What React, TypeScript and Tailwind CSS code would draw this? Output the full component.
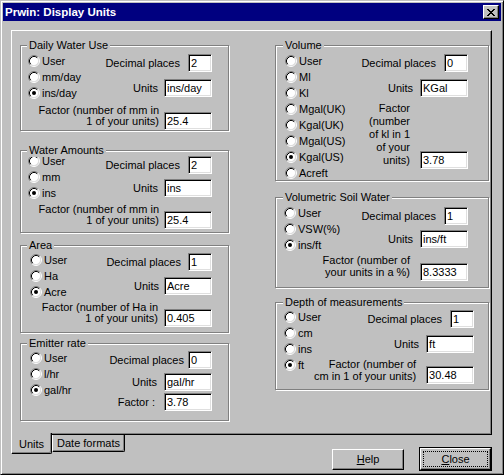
import React from "react";

function Radio({ label, checked }: { label: string; checked?: boolean }) {
  return (
    <div className="flex items-center h-[16px] whitespace-nowrap">
      <svg width="12" height="12" viewBox="0 0 12 12" className="shrink-0">
        <circle cx="6" cy="6" r="4.5" fill="#fff" />
        <path d="M2.11 9.89 A5.5 5.5 0 0 1 9.89 2.11" fill="none" stroke="#808080" />
        <path d="M9.89 2.11 A5.5 5.5 0 0 1 2.11 9.89" fill="none" stroke="#fff" />
        <path d="M2.82 9.18 A4.5 4.5 0 0 1 9.18 2.82" fill="none" stroke="#000" />
        <path d="M9.18 2.82 A4.5 4.5 0 0 1 2.82 9.18" fill="none" stroke="#dfdfdf" />
        {checked && <circle cx="6" cy="6" r="2" fill="#000" />}
      </svg>
      <span className="ml-[2px]">{label}</span>
    </div>
  );
}

function Edit({ value, w }: { value: string; w: string }) {
  return (
    <div
      className={`${w} h-[18px] shrink-0 bg-white border border-t-[#808080] border-l-[#808080] border-b-white border-r-white shadow-[inset_1px_1px_0_#000,inset_-1px_-1px_0_#dfdfdf] pl-[2px] leading-[16px] whitespace-nowrap overflow-hidden`}
    >
      {value}
    </div>
  );
}

function Group({
  label,
  className,
  right,
  children,
}: {
  label: string;
  className: string;
  right?: boolean;
  children: React.ReactNode;
}) {
  return (
    <div
      className={`relative border border-[#808080] shadow-[inset_1px_1px_0_#fff,1px_1px_0_#fff] ${className}`}
    >
      <div
        className={`absolute -top-[7px] ${right ? "left-[7px]" : "left-[6px]"} bg-[#c0c0c0] px-[2px] leading-[13px] whitespace-nowrap`}
      >
        {label}
      </div>
      {children}
    </div>
  );
}

function LabeledEdit({
  label,
  value,
  w,
  gap,
  className,
}: {
  label: string;
  value: string;
  w: string;
  gap: string;
  className?: string;
}) {
  return (
    <div className={`flex items-center ${className ?? ""}`}>
      <span className={`${gap} whitespace-nowrap`}>{label}</span>
      <Edit w={w} value={value} />
    </div>
  );
}

export default function App() {
  return (
    <div className="w-[504px] h-[475px] bg-[#c0c0c0] border border-t-[#c0c0c0] border-l-[#c0c0c0] border-r-black border-b-black shadow-[inset_1px_1px_0_#fff,inset_-1px_-1px_0_#808080] p-[2px] flex flex-col font-['Liberation_Sans',Arial,sans-serif] text-[11px] text-black overflow-hidden">
      {/* Title bar */}
      <div className="h-[18px] shrink-0 bg-[#000080] flex items-center justify-between pl-[2px] pr-[2px]">
        <span className="text-white font-bold text-[11.5px] leading-[18px]">Prwin: Display Units</span>
        <div className="w-[16px] h-[14px] bg-[#c0c0c0] border border-t-white border-l-white border-r-black border-b-black shadow-[inset_-1px_-1px_0_#808080] flex items-center justify-center">
          <svg width="8" height="7" viewBox="0 0 8 7" shapeRendering="crispEdges">
            <path
              d="M0 0h2v1H0z M6 0h2v1H6z M1 1h2v1H1z M5 1h2v1H5z M2 2h4v1H2z M3 3h2v1H3z M2 4h4v1H2z M1 5h2v1H1z M5 5h2v1H5z M0 6h2v1H0z M6 6h2v1H6z"
              fill="#000"
            />
          </svg>
        </div>
      </div>

      {/* Tab panel */}
      <div className="ml-[8px] mt-[9px] w-[481px] h-[405px] shrink-0 border border-t-white border-l-white border-r-black border-b-black shadow-[inset_-1px_-1px_0_#808080] flex pl-[8px] pt-[14px]">
        {/* Left column */}
        <div className="w-[209px] flex flex-col">
          <Group label="Daily Water Use" className="w-[209px] h-[86px]">
            <div className="flex">
              <div className="ml-[7px] mt-[7px] flex flex-col">
                <Radio label="User" />
                <Radio label="mm/day" />
                <Radio label="ins/day" checked />
              </div>
              <div className="flex-1 mr-[16px] mt-[8px] flex flex-col items-end">
                <LabeledEdit label="Decimal places" value="2" w="w-[24px]" gap="mr-[8px]" />
                <LabeledEdit label="Units" value="ins/day" w="w-[48px]" gap="mr-[6px]" className="mt-[7px]" />
              </div>
            </div>
            <div className="mt-[4px] mr-[16px] flex justify-end items-end">
              <div className="mr-[5px] mb-[3px] text-right leading-[11px] whitespace-nowrap">
                Factor (number of mm in
                <br />1 of your units)
              </div>
              <Edit w="w-[48px]" value="25.4" />
            </div>
          </Group>

          <Group label="Water Amounts" className="mt-[19px] w-[209px] h-[83px]">
            <div className="flex">
              <div className="ml-[7px] mt-[2px] flex flex-col">
                <Radio label="User" />
                <Radio label="mm" />
                <Radio label="ins" checked />
              </div>
              <div className="flex-1 mr-[16px] mt-[5px] flex flex-col items-end">
                <LabeledEdit label="Decimal places" value="2" w="w-[24px]" gap="mr-[8px]" />
                <LabeledEdit label="Units" value="ins" w="w-[48px]" gap="mr-[6px]" className="mt-[5px]" />
              </div>
            </div>
            <div className="mt-[3px] mr-[16px] flex justify-end items-end">
              <div className="mr-[5px] mb-[3px] text-right leading-[11px] whitespace-nowrap">
                Factor (number of mm in
                <br />1 of your units)
              </div>
              <Edit w="w-[48px]" value="25.4" />
            </div>
          </Group>

          <Group label="Area" className="mt-[12px] w-[209px] h-[88px]">
            <div className="flex">
              <div className="ml-[9px] mt-[6px] flex flex-col">
                <Radio label="User" />
                <Radio label="Ha" />
                <Radio label="Acre" checked />
              </div>
              <div className="flex-1 mr-[16px] mt-[7px] flex flex-col items-end">
                <LabeledEdit label="Decimal places" value="1" w="w-[24px]" gap="mr-[7px]" />
                <LabeledEdit label="Units" value="Acre" w="w-[48px]" gap="mr-[5px]" className="mt-[6px]" />
              </div>
            </div>
            <div className="mt-[2px] mr-[16px] flex justify-end items-end">
              <div className="mr-[6px] mb-[3px] text-right leading-[11px] whitespace-nowrap">
                Factor (number of Ha in
                <br />1 of your units)
              </div>
              <Edit w="w-[48px]" value="0.405" />
            </div>
          </Group>

          <Group label="Emitter rate" className="mt-[10px] w-[209px] h-[78px]">
            <div className="flex">
              <div className="ml-[9px] mt-[6px] flex flex-col">
                <Radio label="User" />
                <Radio label="l/hr" />
                <Radio label="gal/hr" checked />
              </div>
              <div className="flex-1 mr-[16px] mt-[7px] flex flex-col items-end">
                <LabeledEdit label="Decimal places" value="0" w="w-[24px]" gap="mr-[4px]" />
                <LabeledEdit label="Units" value="gal/hr" w="w-[48px]" gap="mr-[7px]" className="mt-[4px]" />
                <LabeledEdit label="Factor :" value="3.78" w="w-[48px]" gap="mr-[9px]" className="mt-[2px]" />
              </div>
            </div>
          </Group>
        </div>

        {/* Right column */}
        <div className="ml-[46px] w-[214px] flex flex-col">
          <Group label="Volume" right className="w-[214px] h-[136px]">
            <div className="flex">
              <div className="ml-[9px] mt-[7px] flex flex-col">
                <Radio label="User" />
                <Radio label="Ml" />
                <Radio label="Kl" />
                <Radio label="Mgal(UK)" />
                <Radio label="Kgal(UK)" />
                <Radio label="Mgal(US)" />
                <Radio label="Kgal(US)" checked />
                <Radio label="Acreft" />
              </div>
              <div className="flex-1 mr-[20px] mt-[8px] flex flex-col items-end">
                <LabeledEdit label="Decimal places" value="0" w="w-[24px]" gap="mr-[8px]" />
                <LabeledEdit label="Units" value="KGal" w="w-[48px]" gap="mr-[7px]" className="mt-[7px]" />
                <div className="mt-[5px] flex items-end">
                  <div className="mr-[10px] mb-[2px] text-right leading-[13px] whitespace-nowrap">
                    Factor
                    <br />
                    (number
                    <br />
                    of kl in 1
                    <br />
                    of your
                    <br />
                    units)
                  </div>
                  <Edit w="w-[48px]" value="3.78" />
                </div>
              </div>
            </div>
          </Group>

          <Group label="Volumetric Soil Water" right className="mt-[16px] w-[214px] h-[91px]">
            <div className="flex">
              <div className="ml-[8px] mt-[7px] flex flex-col">
                <Radio label="User" />
                <Radio label="VSW(%)" />
                <Radio label="ins/ft" checked />
              </div>
              <div className="flex-1 mr-[20px] mt-[9px] flex flex-col items-end">
                <LabeledEdit label="Decimal places" value="1" w="w-[24px]" gap="mr-[8px]" />
                <LabeledEdit label="Units" value="ins/ft" w="w-[48px]" gap="mr-[7px]" className="mt-[5px]" />
              </div>
            </div>
            <div className="mt-[1px] mr-[20px] flex justify-end items-end">
              <div className="mr-[10px] mb-[3px] text-right leading-[12px] whitespace-nowrap">
                Factor (number of
                <br />
                your units in a %)
              </div>
              <Edit w="w-[48px]" value="8.3333" />
            </div>
          </Group>

          <Group label="Depth of measurements" right className="mt-[14px] w-[214px] h-[88px]">
            <div className="flex">
              <div className="ml-[8px] mt-[6px] w-[30px] shrink-0 flex flex-col">
                <Radio label="User" />
                <Radio label="cm" />
                <Radio label="ins" />
                <Radio label="ft" checked />
              </div>
              <div className="flex-1 mr-[20px] mt-[7px] flex flex-col items-end">
                <LabeledEdit label="Decimal places" value="1" w="w-[24px]" gap="mr-[8px]" />
                <LabeledEdit label="Units" value="ft" w="w-[48px]" gap="mr-[7px]" className="mt-[7px]" />
                <div className="mt-[5px] flex items-end">
                  <div className="mr-[10px] mb-[2px] text-right leading-[12px] whitespace-nowrap">
                    Factor (number of
                    <br />
                    cm in 1 of your units)
                  </div>
                  <Edit w="w-[48px]" value="30.48" />
                </div>
              </div>
            </div>
          </Group>
        </div>
      </div>

      {/* Bottom row: tabs + buttons */}
      <div className="flex items-start">
        <div className="ml-[8px] flex items-start">
          <div className="relative -mt-[2px] w-[41px] h-[21px] bg-[#c0c0c0] border-l border-l-white border-r border-r-black border-b border-b-black shadow-[inset_-1px_-1px_0_#808080] rounded-br-[2px] flex items-center justify-center pt-[2px]">
            Units
          </div>
          <div className="w-[73px] h-[17px] border-l border-l-white border-r border-r-black border-b border-b-black shadow-[inset_-1px_-1px_0_#808080] rounded-br-[2px] flex items-center justify-center">
            Date formats
          </div>
        </div>
        <div className="ml-auto mr-[9px] flex items-start">
          <div className="mt-[14px] w-[72px] h-[21px] border border-t-white border-l-white border-r-black border-b-black shadow-[inset_-1px_-1px_0_#808080] flex items-center justify-center">
            <span>
              <span className="underline">H</span>elp
            </span>
          </div>
          <div className="ml-[15px] mt-[12px] w-[73px] h-[24px] border border-black">
            <div className="relative w-full h-full border border-t-white border-l-white border-r-black border-b-black shadow-[inset_-1px_-1px_0_#808080] flex items-center justify-center">
              <div className="absolute inset-[2px] border border-dotted border-black" />
              <span>
                <span className="underline">C</span>lose
              </span>
            </div>
          </div>
        </div>
      </div>
    </div>
  );
}
